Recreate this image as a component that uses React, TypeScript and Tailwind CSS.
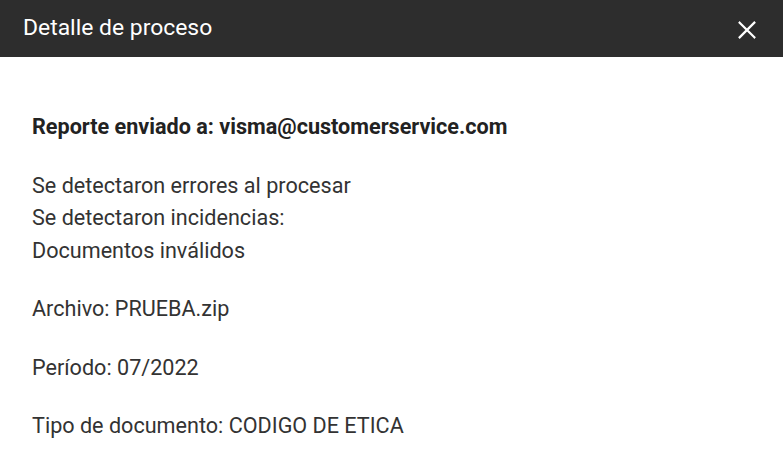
import React from "react";

export default function App() {
  return (
    <div className="w-[783px] h-[450px] bg-white overflow-hidden" style={{ fontFamily: "Roboto, 'Noto Sans', sans-serif" }}>
      <div className="h-[57px] bg-[#2d2d2d] flex items-center justify-between pl-[23px] pr-[24px]">
        <span className="text-white text-[22.9px] leading-none">Detalle de proceso</span>
        <svg width="22" height="22" viewBox="0 0 24 24" className="mr-[1px] mt-[2px]">
          <path d="M4 4L20 20M20 4L4 20" stroke="white" strokeWidth="2.4" strokeLinecap="square" />
        </svg>
      </div>
      <div className="pl-[32px] pt-[54px] text-[21.6px] leading-[32.5px] text-[#333] flex flex-col gap-[26px]">
        <p className="font-bold text-[#222]">Reporte enviado a: visma@customerservice.com</p>
        <div>
          <p>Se detectaron errores al procesar</p>
          <p>Se detectaron incidencias:</p>
          <p>Documentos inválidos</p>
        </div>
        <p>Archivo: PRUEBA.zip</p>
        <p>Período: 07/2022</p>
        <p>Tipo de documento: CODIGO DE ETICA</p>
      </div>
    </div>
  );
}
